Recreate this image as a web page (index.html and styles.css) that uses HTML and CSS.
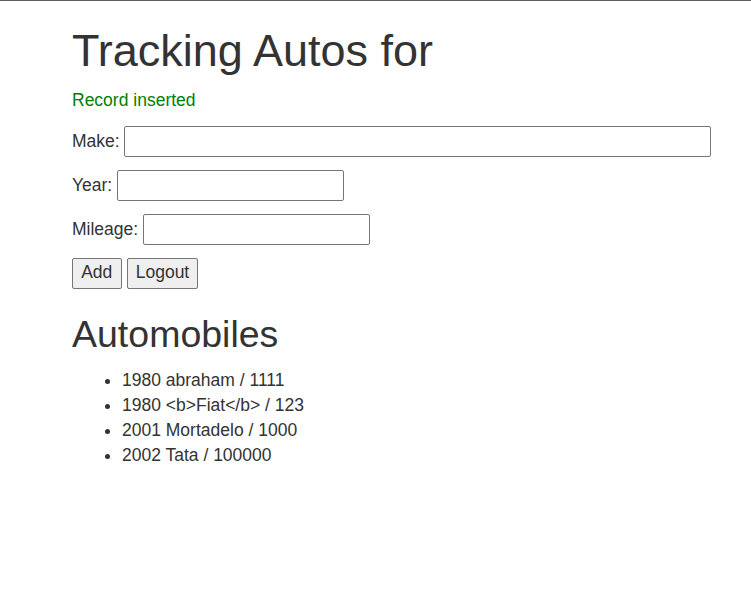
FILE: index.html
```html
<!DOCTYPE html>
<html lang="en">
<head>
<meta charset="utf-8">
<title>Tracking Autos</title>
<link rel="stylesheet" href="styles.css">
</head>
<body>
<div class="container">
  <h1 class="title">Tracking Autos for</h1>
  <p class="flash">Record inserted</p>
  <form class="form">
    <p class="row"><label for="make">Make:</label><input class="field field-wide" type="text" id="make"></p>
    <p class="row"><label for="year">Year:</label><input class="field" type="text" id="year"></p>
    <p class="row"><label for="mileage">Mileage:</label><input class="field" type="text" id="mileage"></p>
    <p class="row row-buttons"><button class="btn" type="button">Add</button><button class="btn" type="button">Logout</button></p>
  </form>
  <h2 class="subtitle">Automobiles</h2>
  <ul class="autos">
    <li>1980 abraham / 1111</li>
    <li>1980 &lt;b&gt;Fiat&lt;/b&gt; / 123</li>
    <li>2001 Mortadelo / 1000</li>
    <li>2002 Tata / 100000</li>
  </ul>
</div>
</body>
</html>
```
FILE: styles.css
```css
html, body {
  margin: 0;
  padding: 0;
  background: #fff;
}
body {
  border-top: 1px solid #5f5f5f;
  font-family: "Liberation Sans", Arial, sans-serif;
  font-size: 17.5px;
  line-height: 25px;
  color: #333;
}
.container {
  padding: 0 40px 0 72px;
}
.title {
  margin: 25px 0 12.5px;
  font-size: 45px;
  font-weight: 500;
  line-height: 1.1;
}
.flash {
  margin: 0 0 12.5px;
  color: #008000;
}
.form {
  margin: 0;
}
.row {
  display: flex;
  align-items: center;
  gap: 4.6px;
  margin: 0 0 13px;
  height: 31px;
}
.row-buttons {
  gap: 5px;
  margin-bottom: 12.5px;
}
.field {
  box-sizing: border-box;
  width: 227px;
  height: 31px;
  margin: 0;
  padding: 1px 3px;
  border: 1px solid #767676;
  border-radius: 2px;
  background: #fff;
  font: inherit;
}
.field-wide {
  width: 587px;
}
.btn {
  box-sizing: border-box;
  height: 31px;
  margin: 0;
  padding: 0 8.2px;
  border: 1px solid #767676;
  border-radius: 2px;
  background: #efefef;
  color: #333;
  font: inherit;
  line-height: 1;
}
.subtitle {
  margin: 25px 0 13px;
  font-size: 37.5px;
  font-weight: 500;
  line-height: 1.1;
}
.autos {
  margin: 0 0 12.5px;
  padding-left: 50px;
}
```
